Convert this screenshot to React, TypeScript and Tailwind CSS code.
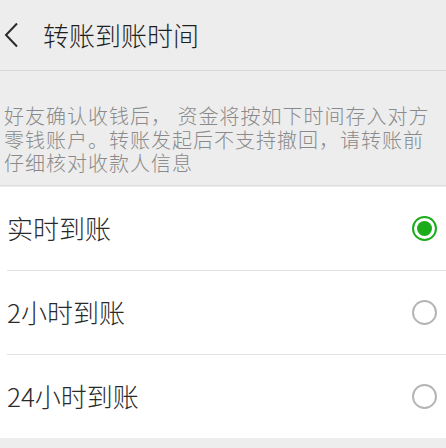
import { useState } from 'react';

type Option = {
  id: string;
  label: string;
};

const options: Option[] = [
  { id: 'realtime', label: '实时到账' },
  { id: '2h', label: '2小时到账' },
  { id: '24h', label: '24小时到账' },
];

const font = { fontFamily: '"Noto Sans CJK SC", "Noto Sans", sans-serif' };

function Radio({ checked }: { checked: boolean }) {
  if (checked) {
    return (
      <span className="flex h-[25px] w-[25px] items-center justify-center rounded-full border-2 border-[#1aad19] bg-white">
        <span className="h-[15px] w-[15px] rounded-full bg-[#1aad19]" />
      </span>
    );
  }
  return <span className="block h-[25px] w-[25px] rounded-full border-2 border-[#b5b5b5] bg-white" />;
}

export default function App() {
  const [selected, setSelected] = useState('realtime');

  return (
    <div className="min-h-[448px] w-full bg-[#ededed] font-light" style={font}>
      {/* Barra de topo */}
      <div className="flex h-[71px] items-center border-b border-[#d9d9d9]">
        <svg width="15" height="26" viewBox="0 0 15 26" className="ml-[4px]">
          <polyline
            points="13,1.5 2,13 13,24.5"
            fill="none"
            stroke="#2b2b2b"
            strokeWidth="2"
            strokeLinejoin="miter"
          />
        </svg>
        <span className="ml-[24px] text-[26px] leading-none text-[#1f1f1f]">转账到账时间</span>
      </div>

      {/* Descrição */}
      <div className="border-b border-[#dedede] pl-[4px] pb-[10px] pt-[33px] text-[20px] leading-[23.5px] tracking-[1px] text-[#8a8a8a]">
        <div className="whitespace-nowrap">好友确认收钱后， 资金将按如下时间存入对方</div>
        <div className="whitespace-nowrap">零钱账户。转账发起后不支持撤回，请转账前</div>
        <div className="whitespace-nowrap">仔细核对收款人信息</div>
      </div>

      {/* Opções */}
      <div className="mt-[1px] bg-white">
        {options.map((o, i) => (
          <div key={o.id}>
            {i > 0 && <div className="ml-[7px] h-px bg-[#e3e3e3]" />}
            <button
              type="button"
              onClick={() => setSelected(o.id)}
              className="flex h-[83px] w-full items-center justify-between pl-[7px] pr-[9px] text-left"
            >
              <span className="text-[26px] leading-none text-[#2a2a2a]">{o.label}</span>
              <Radio checked={selected === o.id} />
            </button>
          </div>
        ))}
      </div>
    </div>
  );
}
